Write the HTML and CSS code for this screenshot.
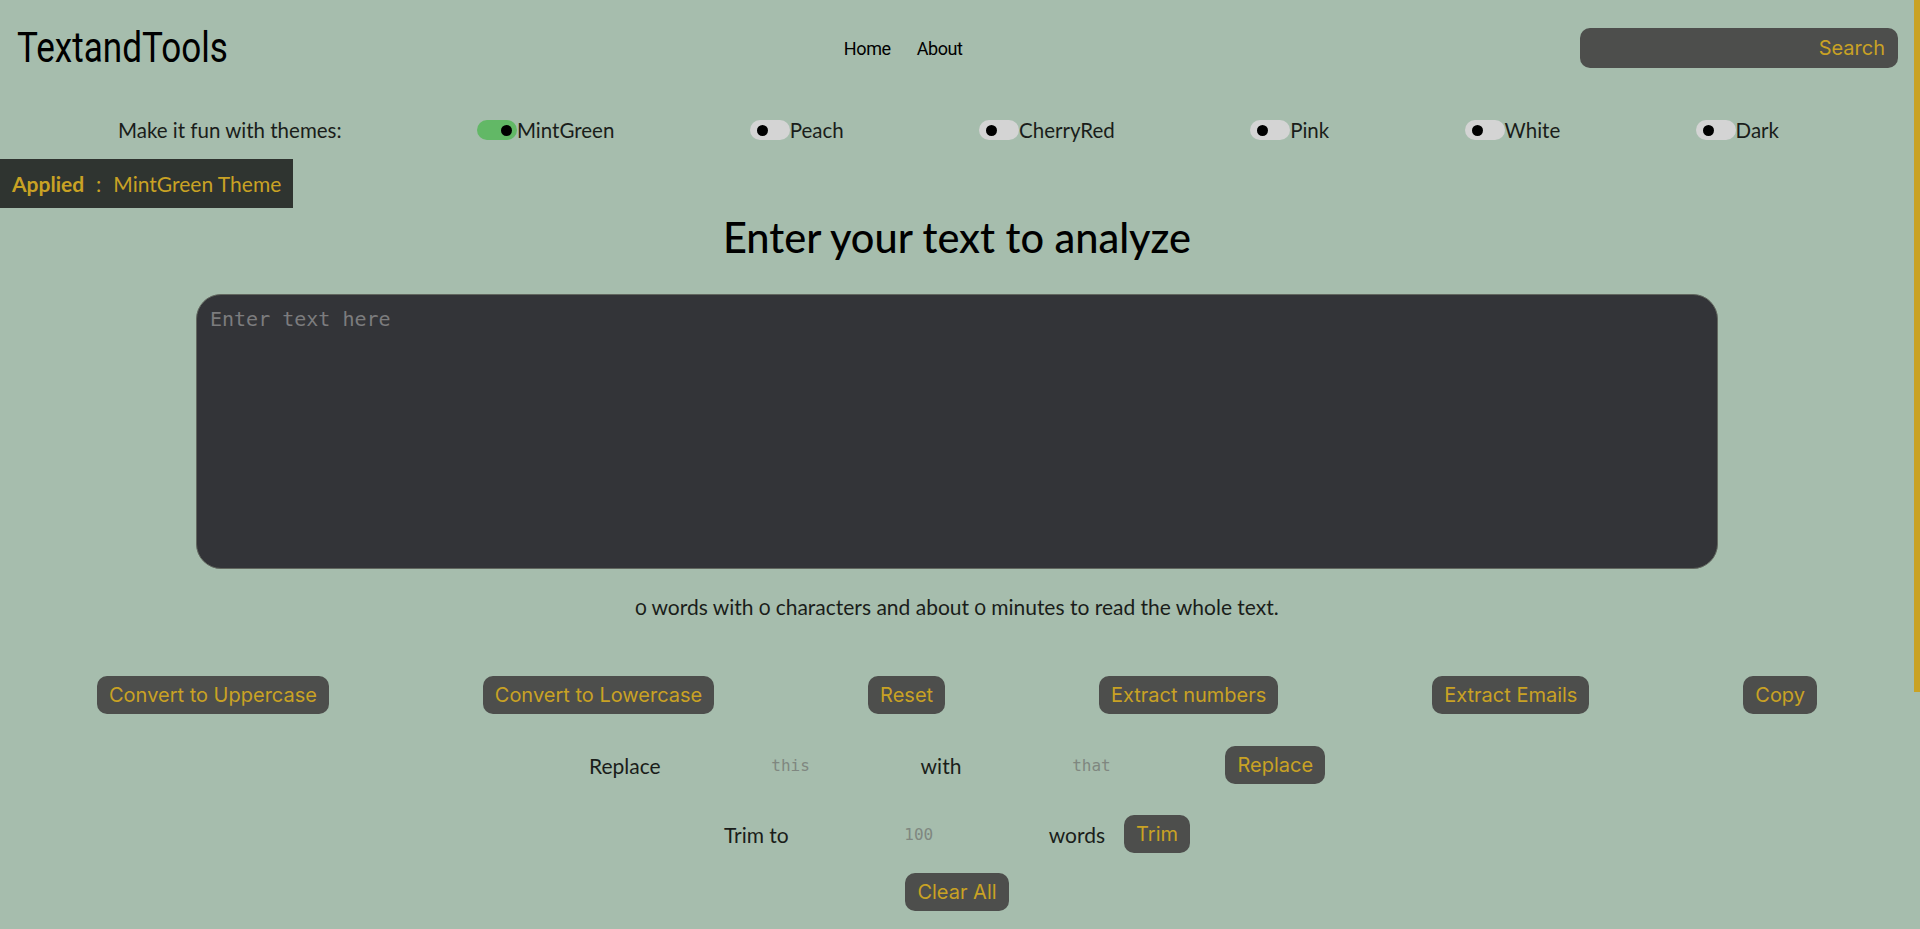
FILE: index.html
```html
<!DOCTYPE html>
<html lang="en">
<head>
<meta charset="utf-8">
<title>TextandTools</title>
<link rel="stylesheet" href="styles.css">
</head>
<body>
<div class="scroll-thumb" aria-hidden="true"></div>
<header class="topbar">
  <div class="brand">TextandTools</div>
  <nav class="nav">
    <a class="nav-link" href="#">Home</a>
    <a class="nav-link" href="#">About</a>
  </nav>
  <form class="search">
    <input class="search-input" type="text" aria-label="Search">
    <button class="search-btn" type="button">Search</button>
  </form>
</header>

<div class="themes">
  <span class="themes-label">Make it fun with themes:</span>
  <label class="theme"><span class="switch on"><span class="knob"></span></span>MintGreen</label>
  <label class="theme"><span class="switch"><span class="knob"></span></span>Peach</label>
  <label class="theme"><span class="switch"><span class="knob"></span></span>CherryRed</label>
  <label class="theme"><span class="switch"><span class="knob"></span></span>Pink</label>
  <label class="theme"><span class="switch"><span class="knob"></span></span>White</label>
  <label class="theme"><span class="switch"><span class="knob"></span></span>Dark</label>
</div>

<div class="applied"><b class="applied-key">Applied</b><span class="applied-sep">:</span><span class="applied-val">MintGreen Theme</span></div>

<main class="main">
  <h1 class="title">Enter your text to analyze</h1>
  <textarea class="textbox" placeholder="Enter text here"></textarea>
  <p class="stats">0 words with 0 characters and about 0 minutes to read the whole text.</p>

  <div class="actions">
    <button class="btn" type="button">Convert to Uppercase</button>
    <button class="btn" type="button">Convert to Lowercase</button>
    <button class="btn" type="button">Reset</button>
    <button class="btn" type="button">Extract numbers</button>
    <button class="btn" type="button">Extract Emails</button>
    <button class="btn" type="button">Copy</button>
  </div>

  <div class="row">
    <span class="row-label">Replace</span>
    <input class="row-input" type="text" placeholder="this">
    <span class="row-label">with</span>
    <input class="row-input" type="text" placeholder="that">
    <button class="btn row-btn" type="button">Replace</button>
  </div>

  <div class="row row-trim">
    <span class="row-label">Trim to</span>
    <input class="row-input" type="text" placeholder="100">
    <span class="row-label">words</span>
    <button class="btn row-btn trim-btn" type="button">Trim</button>
  </div>

  <div class="row row-clear">
    <button class="btn" type="button">Clear All</button>
  </div>
</main>
</body>
</html>
```

FILE: styles.css
```css
html {
  background: #a6bdad;
}
body {
  margin: 0 6px 0 0;
  background: #a6bdad;
  font-family: Lato, "Open Sans", sans-serif;
  color: #151815;
  padding-bottom: 336px;
}
.scroll-thumb {
  position: fixed;
  top: 0;
  right: 0;
  width: 6px;
  height: 692px;
  background: #c9a224;
}

/* header */
.topbar {
  height: 96px;
  display: flex;
  align-items: center;
  justify-content: space-between;
  padding: 0 16px 0 17px;
}
.brand {
  font-family: Roboto, "Liberation Sans", sans-serif;
  font-size: 42px;
  color: #000;
  display: inline-block;
  transform: scaleX(0.835);
  transform-origin: left center;
  margin-right: -43px;
  line-height: 1;
}
.nav {
  display: flex;
  gap: 26px;
}
.nav-link {
  font-family: Roboto, "Liberation Sans", sans-serif;
  font-size: 18px;
  letter-spacing: -0.4px;
  color: #000;
  text-decoration: none;
}
.search {
  margin: 0;
  width: 318px;
  height: 40px;
  background: #4d4e4c;
  border-radius: 10px;
  display: flex;
  align-items: center;
}
.search-input {
  flex: 1;
  min-width: 0;
  height: 100%;
  border: none;
  background: transparent;
  outline: none;
  padding: 0 12px;
  color: #ddd;
}
.search-btn {
  border: none;
  background: transparent;
  color: #c9a224;
  font-family: Inter, "Liberation Sans", sans-serif;
  font-size: 20px;
  padding: 0 13px 0 0;
}

/* themes */
.themes {
  margin-top: 14px;
  height: 40px;
  display: flex;
  align-items: center;
  justify-content: space-between;
  padding: 0 135px 0 118px;
  font-size: 20.5px;
  color: #1a1d1a;
}
.theme {
  display: flex;
  align-items: center;
}
.switch {
  width: 40px;
  height: 20px;
  border-radius: 10px;
  background: #d4d4d4;
  display: flex;
  align-items: center;
  padding: 0 7px;
  box-sizing: border-box;
}
.switch.on {
  background: #62b866;
  justify-content: flex-end;
  padding: 0 5px;
}
.knob {
  width: 11px;
  height: 11px;
  border-radius: 50%;
  background: #000;
}

/* applied badge */
.applied {
  margin-top: 9px;
  display: inline-flex;
  align-items: center;
  height: 49px;
  box-sizing: border-box;
  padding: 0 12px;
  background: #2f3430;
  color: #c9a224;
  font-size: 21px;
  white-space: nowrap;
}
.applied-key {
  font-weight: 700;
}
.applied-sep {
  margin: 0 12px;
}

/* main */
.main {
  display: flex;
  flex-direction: column;
  align-items: center;
}
.title {
  margin: 5px 0 0;
  font-size: 41.5px;
  line-height: 48px;
  font-weight: 500;
  color: #000;
}
.textbox {
  display: block;
  margin-top: 33px;
  width: 1522px;
  height: 275px;
  box-sizing: border-box;
  border: 1px solid #62675f;
  border-radius: 25px;
  background: #333438;
  padding: 12px 13px;
  font-family: "DejaVu Sans Mono", "Liberation Mono", monospace;
  font-size: 20px;
  color: #ddd;
  resize: none;
  outline: none;
}
.textbox::placeholder {
  color: #7c7c7e;
}
.stats {
  margin: 26px 0 0;
  line-height: 24px;
  font-size: 21px;
  color: #1a1d1a;
  font-variant-numeric: oldstyle-nums;
}
.actions {
  margin-top: 57px;
  align-self: stretch;
  display: flex;
  justify-content: space-between;
  padding: 0 97px;
}
.btn {
  height: 38px;
  padding: 0 12px;
  border: none;
  border-radius: 10px;
  background: #4d4e4c;
  color: #c9a224;
  font-family: Inter, "Liberation Sans", sans-serif;
  font-size: 20px;
  white-space: nowrap;
}
.row {
  margin-top: 32px;
  height: 38px;
  display: flex;
  align-items: center;
  justify-content: center;
  font-size: 21px;
  color: #1a1d1a;
}
.row-trim {
  margin-top: 31px;
}
.row-clear {
  margin-top: 20px;
}
.row-input {
  width: 232px;
  margin: 0 12px;
  border: none;
  background: transparent;
  outline: none;
  text-align: center;
  font-family: "DejaVu Sans Mono", "Liberation Mono", monospace;
  font-size: 16px;
  color: #222;
}
.row-input::placeholder {
  color: #7f8780;
}
.row-btn {
  margin-left: 4px;
}
.trim-btn {
  margin-left: 19px;
}
```
